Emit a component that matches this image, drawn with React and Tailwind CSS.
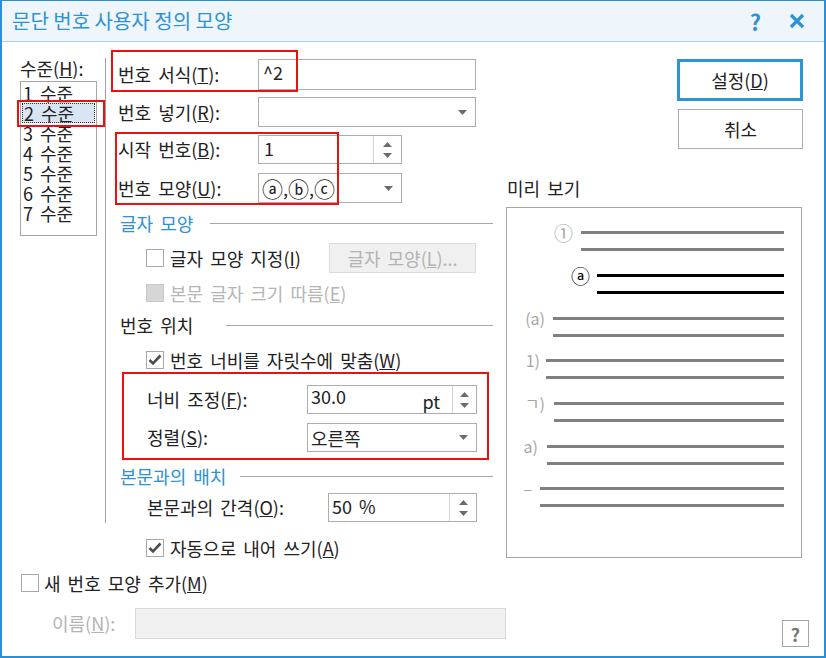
import React from "react";

function Tri({ up }) {
  return (
    <svg width="9" height="5" viewBox="0 0 9 5" className="block">
      <path d={up ? "M0 5 L4.5 0 L9 5 Z" : "M0 0 L9 0 L4.5 5 Z"} fill="#6b6b6b" />
    </svg>
  );
}

function Select({ children, className }) {
  return (
    <div
      className={`flex items-center justify-between border border-[#adadad] bg-white pl-[3px] pr-[8px] ${className}`}
    >
      <span className="leading-[24px] flex items-center">{children}</span>
      <Tri />
    </div>
  );
}

function Spin({ children, className, btn }) {
  return (
    <div className={`flex border border-[#adadad] bg-white ${className}`}>
      <div className="flex-1 flex items-start justify-between pl-[3px] pr-[12px] leading-[24px]">
        {children}
      </div>
      <div
        className={`border-l border-[#d4d4d4] flex flex-col items-center justify-center gap-[6px] ${btn}`}
      >
        <Tri up />
        <Tri />
      </div>
    </div>
  );
}

function Check({ checked, disabled }) {
  return (
    <span
      className={`w-[18px] h-[18px] shrink-0 border flex items-center justify-center ${
        disabled ? "bg-[#d6d6d6] border-[#c8c8c8]" : "bg-white border-[#a8a8a8]"
      }`}
    >
      {checked && (
        <svg width="14" height="12" viewBox="0 0 14 12">
          <path d="M1.5 6 L5 9.5 L12.5 1.5" fill="none" stroke="#4d4d4d" strokeWidth="2.6" />
        </svg>
      )}
    </span>
  );
}

function Heading({ children, blue, gap }) {
  return (
    <div className="flex items-center h-[24px] pl-[2px]">
      <span className={blue ? "text-[#2c92d5]" : ""}>{children}</span>
      <div className={`flex-1 h-px bg-[#a8a8a8] ${gap}`} />
    </div>
  );
}

const preview = [
  { m: "①", mx: 66, lx: 74, y: 24, dark: false, big: true },
  { m: "ⓐ", mx: 83, lx: 90, y: 67, dark: true, big: true },
  { m: "(a)", mx: 38, lx: 46, y: 110, dark: false },
  { m: "1)", mx: 33, lx: 39, y: 152, dark: false },
  { m: "ㄱ)", mx: 38, lx: 47, y: 195, dark: false },
  { m: "a)", mx: 31, lx: 40, y: 238, dark: false },
  { m: "–", mx: 25, lx: 33, y: 280, dark: false },
];

function Preview() {
  return (
    <svg width="294" height="349" viewBox="0 0 294 349">
      {preview.map((p) => (
        <g key={p.m}>
          <text
            x={p.mx}
            y={p.y}
            textAnchor="end"
            dominantBaseline="central"
            fontSize={p.big ? "19" : "16"}
            fontFamily="'Noto Sans CJK KR', sans-serif"
            fill={p.dark ? "#000" : "#a6a6a6"}
          >
            {p.m}
          </text>
          <rect x={p.lx} y={p.y - 1} width={277 - p.lx} height="3" fill={p.dark ? "#000" : "#808080"} />
          <rect x={p.lx} y={p.y + 16} width={277 - p.lx} height="3" fill={p.dark ? "#000" : "#808080"} />
        </g>
      ))}
    </svg>
  );
}

export default function App() {
  const levels = ["1 수준", "2 수준", "3 수준", "4 수준", "5 수준", "6 수준", "7 수준"];

  return (
    <div className="relative w-[826px] h-[658px] bg-white border-x-2 border-t border-b-2 border-[#2b8fd4] flex flex-col overflow-hidden font-['Noto_Sans_CJK_KR','Noto_Sans',sans-serif] text-[18px] text-[#222] [word-spacing:3px]">
      {/* Title bar */}
      <div className="h-[41px] shrink-0 bg-[#eef6fb] border-b border-[#a9d0ea] flex items-center pl-[10px] pr-[19px] [word-spacing:0px]">
        <span className="text-[20px] text-[#2e93d5]">문단 번호 사용자 정의 모양</span>
        <span className="ml-auto text-[22px] font-bold text-[#2e93d5] leading-none">?</span>
        <svg width="16" height="16" viewBox="0 0 16 16" className="ml-[28px]">
          <path d="M2 2 L14 14 M14 2 L2 14" stroke="#2e93d5" strokeWidth="3.2" />
        </svg>
      </div>

      {/* Main area */}
      <div className="flex h-[523px] shrink-0">
        {/* Level list */}
        <div className="ml-[18px] w-[77px] pt-[15px]">
          <div className="leading-[22px]">
            수준(<u>H</u>):
          </div>
          <div className="mt-[2px] h-[155px] border border-[#a6a6a6] pt-[1px]">
            {levels.map((l, i) => (
              <div
                key={l}
                className={`h-[20px] leading-[20px] pl-[2px] ${
                  i === 1 ? "bg-[#d9e5f3] outline outline-1 outline-dotted outline-[#333] -outline-offset-1 mx-[1px] pl-[1px]" : ""
                }`}
              >
                {l}
              </div>
            ))}
          </div>
        </div>

        <div className="ml-[8px] mt-[16px] w-px h-[465px] bg-[#a0a0a0]" />

        {/* Settings */}
        <div className="ml-[12px] w-[375px] flex flex-col">
          <div className="mt-[17px] h-[31px] flex items-center">
            <span className="w-[140px]">
              번호 서식(<u>T</u>):
            </span>
            <div className="w-[218px] h-full border border-[#adadad] pl-[4px] leading-[24px]">^2</div>
          </div>
          <div className="mt-[7px] h-[30px] flex items-center">
            <span className="w-[140px]">
              번호 넣기(<u>R</u>):
            </span>
            <Select className="w-[218px] h-full" />
          </div>
          <div className="mt-[8px] h-[29px] flex items-center">
            <span className="w-[140px]">
              시작 번호(<u>B</u>):
            </span>
            <Spin className="w-[144px] h-full" btn="w-[28px]">
              <span className="pl-[2px]">1</span>
            </Spin>
          </div>
          <div className="mt-[9px] h-[30px] flex items-center">
            <span className="w-[140px]">
              번호 모양(<u>U</u>):
            </span>
            <Select className="w-[144px] h-full">
              <span className="text-[21px] leading-none">ⓐ</span>,
              <span className="text-[21px] leading-none">ⓑ</span>,
              <span className="text-[21px] leading-none">ⓒ</span>
            </Select>
          </div>

          <div className="mt-[8px]">
            <Heading blue gap="ml-[17px]">글자 모양</Heading>
          </div>
          <div className="mt-[8px] h-[30px] flex items-center pl-[28px] pr-[17px]">
            <Check />
            <span className="ml-[6px]">
              글자 모양 지정(<u>I</u>)
            </span>
            <div className="ml-auto w-[147px] h-full bg-[#f0f0f0] border border-[#dcdcdc] flex items-center justify-center text-[#b3b3b3]">
              <span>
                글자 모양(<u>L</u>)...
              </span>
            </div>
          </div>
          <div className="mt-[8px] h-[24px] flex items-center pl-[28px]">
            <Check disabled />
            <span className="ml-[6px] text-[#b5b5b5]">
              본문 글자 크기 따름(<u>E</u>)
            </span>
          </div>

          <div className="mt-[8px]">
            <Heading gap="ml-[33px]">번호 위치</Heading>
          </div>
          <div className="mt-[11px] h-[24px] flex items-center pl-[28px]">
            <Check checked />
            <span className="ml-[6px]">
              번호 너비를 자릿수에 맞춤(<u>W</u>)
            </span>
          </div>
          <div className="mt-[13px] h-[29px] flex items-center pl-[29px]">
            <span className="w-[160px]">
              너비 조정(<u>F</u>):
            </span>
            <Spin className="w-[170px] h-full" btn="w-[24px]">
              <span className="-mt-[2px]">30.0</span>
              <span className="mt-[3px]">pt</span>
            </Spin>
          </div>
          <div className="mt-[9px] h-[29px] flex items-center pl-[29px]">
            <span className="w-[160px]">
              정렬(<u>S</u>):
            </span>
            <Select className="w-[170px] h-full">오른쪽</Select>
          </div>

          <div className="mt-[12px]">
            <Heading blue gap="ml-[14px]">본문과의 배치</Heading>
          </div>
          <div className="mt-[5px] h-[29px] flex items-center pl-[29px]">
            <span className="w-[181px]">
              본문과의 간격(<u>O</u>):
            </span>
            <Spin className="w-[149px] h-full" btn="w-[27px]">
              <span>50 %</span>
            </Spin>
          </div>
          <div className="mt-[14px] h-[24px] flex items-center pl-[28px]">
            <Check checked />
            <span className="ml-[6px]">
              자동으로 내어 쓰기(<u>A</u>)
            </span>
          </div>
        </div>

        {/* Buttons & preview */}
        <div className="ml-[13px] w-[297px] flex flex-col">
          <button className="self-end mt-[17px] w-[126px] h-[42px] border-[3px] border-[#2e94d6] bg-white">
            설정(<u>D</u>)
          </button>
          <button className="self-end mt-[8px] w-[125px] h-[40px] border border-[#adadad] bg-white">
            취소
          </button>
          <div className="mt-[27px] h-[24px] leading-[24px] pl-[1px]">미리 보기</div>
          <div className="mt-[7px] w-[296px] h-[351px] border border-[#a6a6a6]">
            <Preview />
          </div>
        </div>
      </div>

      {/* Bottom */}
      <div className="mt-[6px] h-[24px] flex items-center pl-[19px]">
        <Check />
        <span className="ml-[5px]">
          새 번호 모양 추가(<u>M</u>)
        </span>
      </div>
      <div className="mt-[13px] flex items-start">
        <span className="ml-[50px] w-[83px] h-[31px] leading-[31px] text-[#b3b3b3]">
          이름(<u>N</u>):
        </span>
        <div className="w-[371px] h-[31px] bg-[#f0f0f0] border border-[#d9d9d9]" />
        <div className="ml-[276px] mt-[12px] w-[27px] h-[27px] border border-[#a5a5a5] flex items-center justify-center text-[18px] font-bold text-[#777] leading-none">
          ?
        </div>
      </div>

      {/* Red annotation boxes */}
      <div className="absolute left-[109px] top-[49px] w-[187px] h-[42px] border-2 border-[#ee1010]" />
      <div className="absolute left-[113px] top-[131px] w-[224px] h-[73px] border-2 border-[#ee1010]" />
      <div className="absolute left-[120px] top-[371px] w-[367px] h-[88px] border-2 border-[#ee1010]" />
      <div className="absolute left-[15px] top-[99px] w-[88px] h-[27px] border-2 border-[#ee1010]" />
    </div>
  );
}
